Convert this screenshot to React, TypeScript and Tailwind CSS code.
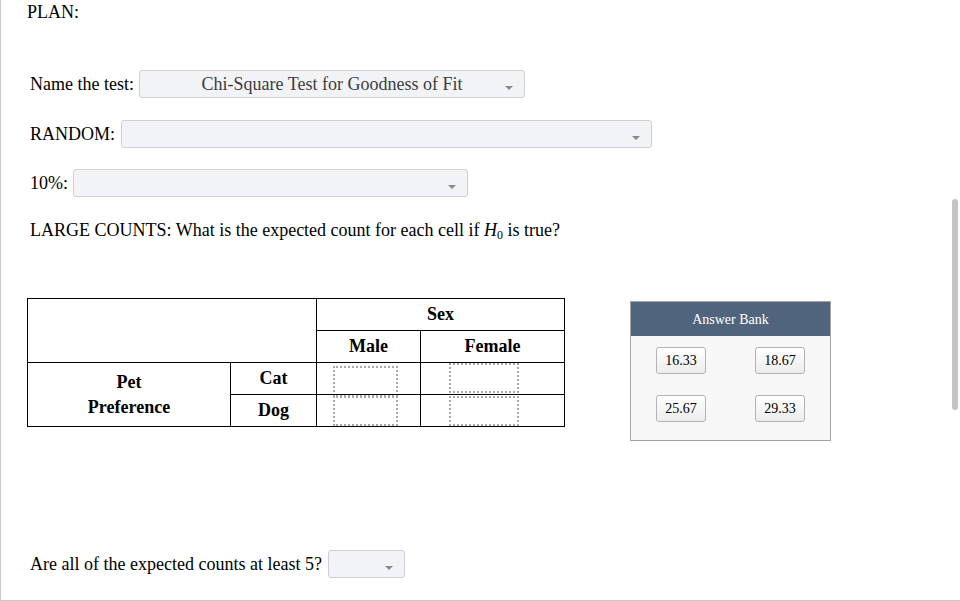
const SERIF = { fontFamily: '"Liberation Serif", "Times New Roman", serif' };

function Select({ width, value }: { width: string; value?: string }) {
  return (
    <div
      className={`relative h-[28px] ${width} rounded-[3px] border border-[#cfd0d4] bg-[#f2f3f6] flex items-center justify-center`}
    >
      {value && <span className="text-[18px] text-[#3d3d3d] leading-none">{value}</span>}
      <span className="absolute right-[11px] top-[15px] w-0 h-0 border-l-[4px] border-r-[4px] border-t-[4px] border-l-transparent border-r-transparent border-t-[#8a8a8a]" />
    </div>
  );
}

function DropBox({ shift }: { shift?: string }) {
  return <div className={`h-[30px] border-2 border-dotted border-[#a8a8a8] ${shift ?? ""}`} />;
}

const ANSWERS = ["16.33", "18.67", "25.67", "29.33"];

export default function App() {
  return (
    <div
      className="relative w-[960px] h-[601px] bg-white border-l border-b border-[#c8c8c8] pl-[29px] text-black overflow-hidden"
      style={SERIF}
    >
      {/* Header */}
      <div className="h-[24px] flex items-center text-[18px] ml-[-3px]">PLAN:</div>

      <div className="mt-[46px] flex items-center gap-[5px] text-[18px]">
        <span>Name the test:</span>
        <Select width="w-[386px]" value="Chi-Square Test for Goodness of Fit" />
      </div>

      <div className="mt-[22px] flex items-center gap-[6px] text-[18px]">
        <span>RANDOM:</span>
        <Select width="w-[531px]" />
      </div>

      <div className="mt-[21px] flex items-center gap-[5px] text-[18px]">
        <span>10%:</span>
        <Select width="w-[395px]" />
      </div>

      <div className="mt-[21px] h-[24px] flex items-center text-[18px]">
        <span>
          LARGE COUNTS: What is the expected count for each cell if{" "}
          <i>H</i>
          <sub className="text-[12px]">0</sub> is true?
        </span>
      </div>

      {/* Table + answer bank */}
      <div className="mt-[56px] ml-[-3px] flex items-start gap-[65px]">
        <table className="border-collapse text-[18px] font-bold">
          <tbody>
            <tr className="h-[32px]">
              <td colSpan={2} rowSpan={2} className="border border-black w-[289px]" />
              <td colSpan={2} className="border border-black text-center">
                Sex
              </td>
            </tr>
            <tr className="h-[32px]">
              <td className="border border-black text-center w-[104px]">Male</td>
              <td className="border border-black text-center w-[144px]">Female</td>
            </tr>
            <tr className="h-[32px]">
              <td rowSpan={2} className="border border-black text-center w-[203px] leading-[25px]">
                Pet
                <br />
                Preference
              </td>
              <td className="border border-black text-center w-[86px]">Cat</td>
              <td className="border border-black p-0">
                <DropBox shift="w-[65px] ml-[16px] mt-[2px] mb-[-2px]" />
              </td>
              <td className="border border-black p-0">
                <DropBox shift="w-[70px] ml-[28px] mt-[-2px]" />
              </td>
            </tr>
            <tr className="h-[32px]">
              <td className="border border-black text-center">Dog</td>
              <td className="border border-black p-0">
                <DropBox shift="w-[65px] ml-[16px]" />
              </td>
              <td className="border border-black p-0">
                <DropBox shift="w-[70px] ml-[28px]" />
              </td>
            </tr>
          </tbody>
        </table>

        <div className="mt-[3px] w-[201px] border border-[#a3a3a3] bg-[#f7f7f7]">
          <div className="h-[34px] bg-[#50647d] flex items-center justify-center text-[14px] text-white">
            Answer Bank
          </div>
          <div className="grid grid-cols-2 gap-y-[21px] px-[25px] pt-[11px] pb-[18px]">
            {ANSWERS.map((a, i) => (
              <div
                key={a}
                className={`w-[50px] h-[27px] flex items-center justify-center rounded-[3px] border border-[#b4b4b4] bg-gradient-to-b from-white to-[#ececec] text-[14px] ${
                  i % 2 === 1 ? "justify-self-end" : ""
                }`}
              >
                {a}
              </div>
            ))}
          </div>
        </div>
      </div>

      <div className="mt-[109px] flex items-center gap-[6px] text-[18px]">
        <span>Are all of the expected counts at least 5?</span>
        <Select width="w-[77px]" />
      </div>

      {/* Scrollbar thumb */}
      <div className="absolute right-[2px] top-[199px] w-[6px] h-[211px] rounded-full bg-[#c4c4c4]" />
    </div>
  );
}
